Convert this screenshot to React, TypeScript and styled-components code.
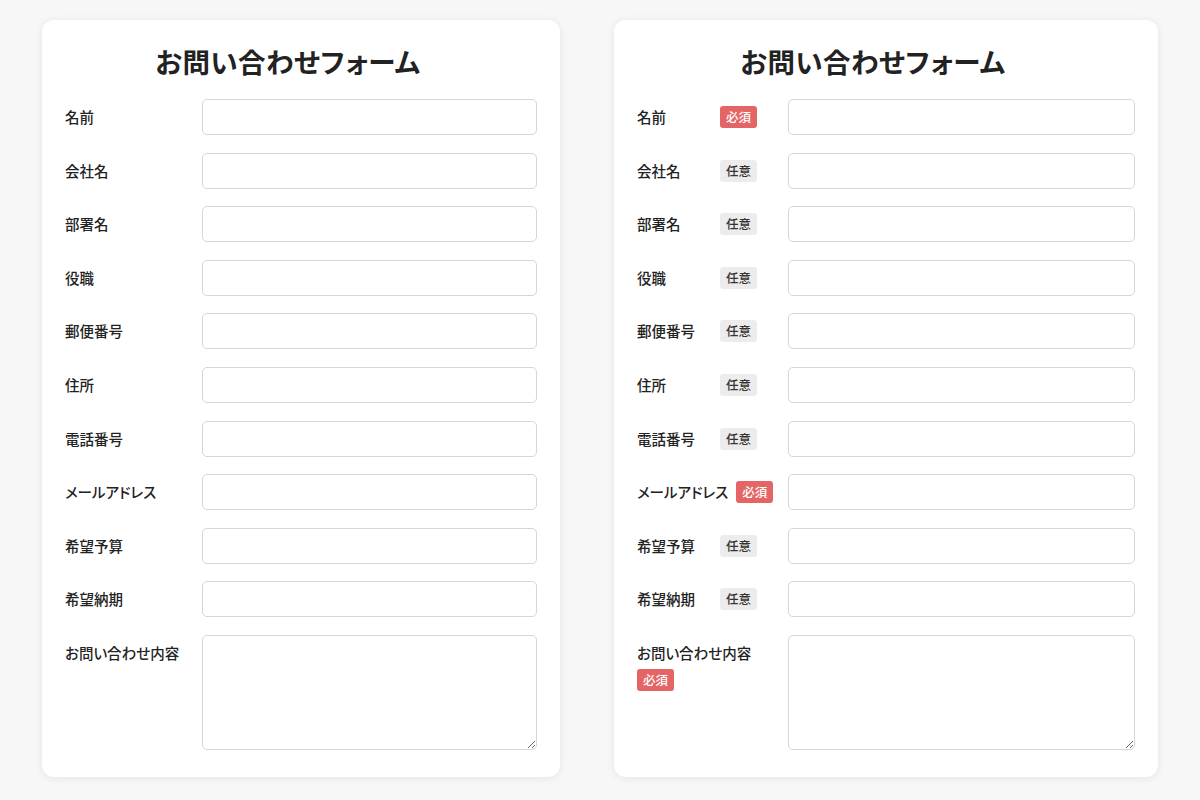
import React from 'react';
import styled, { createGlobalStyle } from 'styled-components';

const GlobalStyle = createGlobalStyle`
    body {
        margin: 0;
        background: #f7f7f7;
        font-family: "Noto Sans CJK JP", "Noto Sans", sans-serif;
        font-feature-settings: "palt";
        color: #222;
    }
`;

const Page = styled.div`
    display: flex;
    gap: 54px;
    padding: 20px 42px 23px;
    height: 800px;
    box-sizing: border-box;
`;

const Card = styled.div<{ $width: number }>`
    width: ${({ $width }) => $width}px;
    background: #fff;
    border-radius: 12px;
    box-shadow: 0 1px 8px rgba(0, 0, 0, 0.08);
    padding: 23px 23px 0;
    box-sizing: border-box;
`;

const Title = styled.h1`
    margin: 0 0 20px;
    padding-right: 26px;
    font-size: 27.5px;
    line-height: 36px;
    font-weight: 700;
    letter-spacing: 0.5px;
    text-align: center;
    color: #222;
`;

const Rows = styled.div`
    display: flex;
    flex-direction: column;
    gap: 17.6px;
`;

const Row = styled.div<{ $labelWidth: number; $gap: number }>`
    display: grid;
    grid-template-columns: ${({ $labelWidth }) => $labelWidth}px 1fr;
    column-gap: ${({ $gap }) => $gap}px;
    align-items: start;
`;

const LabelBox = styled.div<{ $badged: boolean }>`
    display: flex;
    flex-wrap: wrap;
    align-items: center;
    column-gap: 8px;
    row-gap: 5px;
    padding-top: ${({ $badged }) => ($badged ? '7px' : '8px')};
    font-size: 14.5px;
    line-height: ${({ $badged }) => ($badged ? '22px' : '20px')};
    font-weight: 500;
`;

const LabelText = styled.span<{ $badged: boolean }>`
    min-width: ${({ $badged }) => ($badged ? '75px' : '0')};
    white-space: nowrap;
`;

const Badge = styled.span<{ $required: boolean }>`
    display: inline-block;
    height: 22px;
    padding: 0 6px;
    border-radius: 3px;
    font-size: 12.5px;
    line-height: 22px;
    font-weight: 500;
    background: ${({ $required }) => ($required ? '#e36565' : '#ececec')};
    color: ${({ $required }) => ($required ? '#fff' : '#333')};
`;

const Input = styled.input`
    width: 100%;
    height: 36px;
    box-sizing: border-box;
    border: 1px solid #d6d6d6;
    border-radius: 5px;
    background: #fff;
    font-family: inherit;
    font-size: 14px;
    padding: 0 10px;
`;

const TextArea = styled.textarea`
    width: 100%;
    height: 115px;
    box-sizing: border-box;
    border: 1px solid #d6d6d6;
    border-radius: 5px;
    background: #fff;
    font-family: inherit;
    font-size: 14px;
    padding: 8px 10px;
    display: block;
`;

type Field = { label: string; required: boolean; multiline?: boolean };

const fields: Field[] = [
    { label: '名前', required: true },
    { label: '会社名', required: false },
    { label: '部署名', required: false },
    { label: '役職', required: false },
    { label: '郵便番号', required: false },
    { label: '住所', required: false },
    { label: '電話番号', required: false },
    { label: 'メールアドレス', required: true },
    { label: '希望予算', required: false },
    { label: '希望納期', required: false },
    { label: 'お問い合わせ内容', required: true, multiline: true },
];

const ContactForm: React.FC<{ width: number; labelWidth: number; gap: number; badges: boolean }> = ({
    width,
    labelWidth,
    gap,
    badges,
}) => (
    <Card $width={width}>
        <Title>お問い合わせフォーム</Title>
        <Rows>
            {fields.map((f) => (
                <Row key={f.label} $labelWidth={labelWidth} $gap={gap}>
                    <LabelBox $badged={badges}>
                        <LabelText $badged={badges}>{f.label}</LabelText>
                        {badges && <Badge $required={f.required}>{f.required ? '必須' : '任意'}</Badge>}
                    </LabelBox>
                    {f.multiline ? <TextArea /> : <Input type="text" />}
                </Row>
            ))}
        </Rows>
    </Card>
);

export default function App() {
    return (
        <>
            <GlobalStyle />
            <Page>
                <ContactForm width={518} labelWidth={121} gap={16} badges={false} />
                <ContactForm width={544} labelWidth={143} gap={8} badges={true} />
            </Page>
        </>
    );
}
